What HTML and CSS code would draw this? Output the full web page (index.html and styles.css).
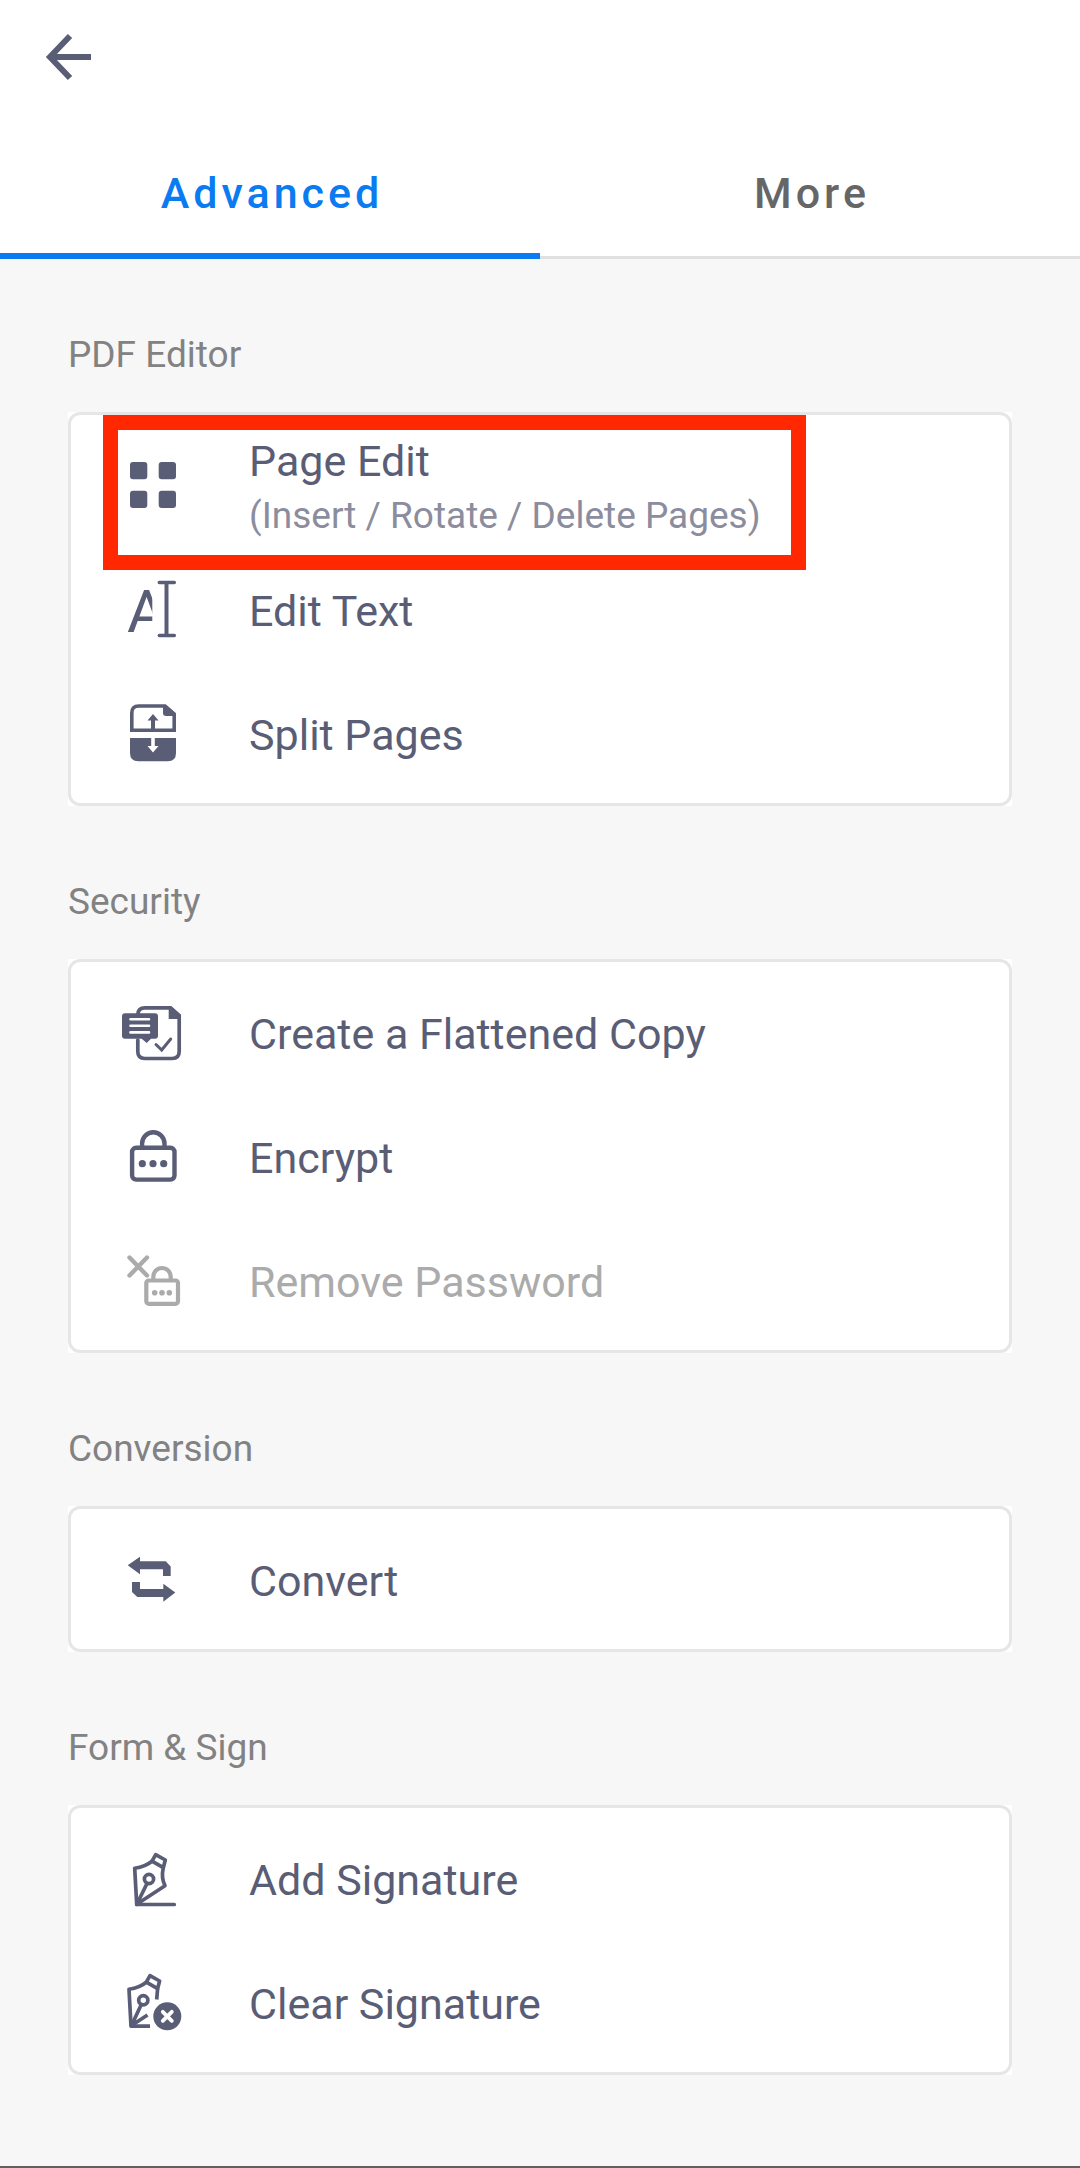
FILE: index.html
```html
<!DOCTYPE html>
<html lang="en">

<head>
    <meta charset="UTF-8">
    <meta name="viewport" content="width=device-width, initial-scale=1.0">
    <title>PDF Tools</title>
    <link rel="stylesheet" href="styles.css">
</head>

<body>

    <header class="toolbar">
        <button class="back-button" type="button" aria-label="Back">
            <svg viewBox="0 0 56 56" fill="none" stroke="currentColor" stroke-width="6">
                <path d="M51 28H10M30 7L10 28L30 49" />
            </svg>
        </button>
    </header>

    <nav class="tabs" role="tablist">
        <button class="tab active" type="button" role="tab" aria-selected="true">Advanced</button>
        <button class="tab" type="button" role="tab" aria-selected="false">More</button>
    </nav>

    <main class="content">
        <section>
            <h2>PDF Editor</h2>
            <div class="card">
                <ul>
                    <li class="highlighted">
                        <button class="row" type="button">
                            <svg class="icon" viewBox="0 0 68 68" fill="currentColor">
                                <rect x="11" y="11" width="17.3" height="17.3" rx="3" />
                                <rect x="39.7" y="11" width="17.3" height="17.3" rx="3" />
                                <rect x="11" y="39.7" width="17.3" height="17.3" rx="3" />
                                <rect x="39.7" y="39.7" width="17.3" height="17.3" rx="3" />
                            </svg>
                            <span class="label">
                                <span>Page Edit</span>
                                <span class="sub">(Insert / Rotate / Delete Pages)</span>
                            </span>
                        </button>
                    </li>
                    <li>
                        <button class="row" type="button">
                            <svg class="icon" viewBox="0 0 68 68" aria-hidden="true">
                                <clipPath id="letterClip">
                                    <rect x="0" y="0" width="33.3" height="68" />
                                </clipPath>
                                <text class="icon-letter" x="8" y="57" clip-path="url(#letterClip)">A</text>
                                <path d="M40.3 7.5H55.3M40.3 60.5H55.3" fill="none" stroke="currentColor" stroke-width="3.5" stroke-linecap="round" />
                                <path d="M47.5 7.5V60.5" stroke="currentColor" stroke-width="4" />
                            </svg>
                            <span class="label">Edit Text</span>
                        </button>
                    </li>
                    <li>
                        <button class="row" type="button">
                            <svg class="icon" viewBox="0 0 68 68" fill="none" stroke="currentColor">
                                <path d="M12.8 31.2V14Q12.8 7 19.8 7H46L55.2 15V31.2Z" stroke-width="3.6" />
                                <path d="M44 6H47L57 14.5V17H47Q44 17 44 14Z" fill="currentColor" stroke="none" />
                                <path d="M34 32V20" stroke-width="4" />
                                <path d="M34 15L39.5 21.5H28.5Z" fill="currentColor" stroke="none" />
                                <path d="M11 39H57V54Q57 62.3 48.7 62.3H19.3Q11 62.3 11 54Z" fill="currentColor" stroke="none" />
                                <path d="M34 38V49" stroke="#fff" stroke-width="3.6" />
                                <path d="M34 53.5L39.5 47H28.5Z" fill="#fff" stroke="none" />
                            </svg>
                            <span class="label">Split Pages</span>
                        </button>
                    </li>
                </ul>
            </div>
        </section>

        <section>
            <h2>Security</h2>
            <div class="card">
                <ul>
                    <li>
                        <button class="row" type="button">
                            <svg class="icon" viewBox="0 0 68 68" fill="none" stroke="currentColor" stroke-linecap="round">
                                <path d="M18.8 18V17Q18.8 9.8 26 9.8H51.5L60.2 17.5V53.5Q60.2 60.5 53.2 60.5H25.8Q18.8 60.5 18.8 53.5V42" stroke-width="3.7" />
                                <path d="M49.7 8.5H52.5L62 17V21H49.7Z" fill="currentColor" stroke="none" />
                                <path d="M6 15.3H36Q39 15.3 39 18.3V37.7Q39 40.7 36 40.7H32L27.7 45L22.7 40.7H6Q3 40.7 3 37.7V18.3Q3 15.3 6 15.3Z" fill="currentColor" stroke="none" />
                                <path d="M11.5 21.2H30M11.5 27.8H30M11.5 34.4H30" stroke="#fff" stroke-width="2.6" />
                                <path d="M37 46.5L42.7 52L51.7 41" stroke-width="3" />
                            </svg>
                            <span class="label">Create a Flattened Copy</span>
                        </button>
                    </li>
                    <li>
                        <button class="row" type="button">
                            <svg class="icon" viewBox="0 0 68 68" fill="none" stroke="currentColor">
                                <rect x="13.1" y="25.8" width="42.4" height="31.8" rx="4" stroke-width="4.4" />
                                <path d="M23.1 25V21.5A11.2 11.2 0 0 1 45.5 21.5V25" stroke-width="4.4" />
                                <g fill="currentColor" stroke="none">
                                    <circle cx="23.3" cy="41.7" r="3.6" />
                                    <circle cx="34" cy="41.7" r="3.6" />
                                    <circle cx="44.7" cy="41.7" r="3.6" />
                                </g>
                            </svg>
                            <span class="label">Encrypt</span>
                        </button>
                    </li>
                    <li>
                        <button class="row" type="button" disabled>
                            <svg class="icon" viewBox="0 0 68 68" fill="none" stroke="currentColor">
                                <path d="M10.5 11.5L28 29.5M28 11.5L10.5 29.5" stroke-width="4.4" stroke-linecap="round" />
                                <rect x="27.3" y="34.5" width="31.7" height="23.3" rx="2.5" stroke-width="4.2" />
                                <path d="M34.3 34V30.7A8.7 8.7 0 0 1 51.7 30.7V34" stroke-width="4.2" />
                                <g fill="currentColor" stroke="none">
                                    <circle cx="35.7" cy="46.7" r="2.8" />
                                    <circle cx="43" cy="46.7" r="2.8" />
                                    <circle cx="50.3" cy="46.7" r="2.8" />
                                </g>
                            </svg>
                            <span class="label">Remove Password</span>
                        </button>
                    </li>
                </ul>
            </div>
        </section>

        <section>
            <h2>Conversion</h2>
            <div class="card">
                <ul>
                    <li>
                        <button class="row" type="button">
                            <svg class="icon" viewBox="0 0 68 68" fill="currentColor">
                                <path d="M8.7 20.3L21 11.7V16.3H46.7L51.7 21.5V31H44V24.3H21V29.3Z" />
                                <path d="M13 37H21V44H44.3V38.7L56.3 47.5L44.3 56.7V52H18.3L13 46.9Z" />
                            </svg>
                            <span class="label">Convert</span>
                        </button>
                    </li>
                </ul>
            </div>
        </section>

        <section>
            <h2>Form &amp; Sign</h2>
            <div class="card">
                <ul>
                    <li>
                        <button class="row" type="button">
                            <svg class="icon" viewBox="0 0 68 68" fill="none" stroke="currentColor" stroke-width="3.7" stroke-linejoin="round" stroke-linecap="round">
                                <path d="M36.7 10.7L46.3 16L44.3 23.7L33 17.2Z" />
                                <path d="M33 17.2Q26.5 22.5 15.7 24.3L17.7 60.3L46 41.7Q42 34 44.3 23.7" />
                                <circle cx="30" cy="35" r="4.6" />
                                <path d="M28 39.5L17.7 60.5H55.3" />
                            </svg>
                            <span class="label">Add Signature</span>
                        </button>
                    </li>
                    <li>
                        <button class="row" type="button">
                            <svg class="icon" viewBox="0 0 68 68" fill="none" stroke="currentColor" stroke-width="3.7" stroke-linejoin="round">
                                <path d="M31 7.7L40.6 13L38.6 20.7L27.3 14.2Z" />
                                <path d="M38.6 20.7L37.7 31.5M27.3 14.2Q20.8 19.5 10 21.3L12 58.2H31" />
                                <circle cx="24.3" cy="32.3" r="4.6" />
                                <path d="M22.3 36.5L12.5 57.5L28.5 47" />
                                <circle cx="48.3" cy="48.3" r="14" fill="currentColor" stroke="none" />
                                <path d="M43.8 43.8L52.8 52.8M52.8 43.8L43.8 52.8" stroke="#fff" stroke-width="3.8" stroke-linecap="round" />
                            </svg>
                            <span class="label">Clear Signature</span>
                        </button>
                    </li>
                </ul>
            </div>
        </section>
    </main>

</body>

</html>
```

FILE: styles.css
```css
*,
*::after {
    box-sizing: border-box;
}

body {
    font-family: Roboto, "Liberation Sans", sans-serif;
    margin: 0;
    display: flex;
    flex-direction: column;
    min-height: 100vh;
    background-color: #f7f7f7;
    color: #5a5d76;
    border-bottom: 2px solid #606060;
}

button {
    font: inherit;
    color: inherit;
    background: none;
    border: none;
    padding: 0;
    cursor: pointer;
}

svg {
    display: block;
    flex: none;
}

.toolbar {
    background-color: #fff;
    padding: 29px 40px 43px;
}

.back-button {
    display: block;
    width: 56px;
    height: 56px;
}

.tabs {
    display: flex;
    background-color: #fff;
}

.tab {
    flex: 1;
    height: 131px;
    padding: 0 0 2px 4px;
    font-size: 43px;
    font-weight: 500;
    letter-spacing: 4px;
    color: #666;
    box-shadow: inset 0 -3px 0 #e0e0e0;
}

.tab.active {
    color: #0a7bf0;
    box-shadow: inset 0 -6px 0 #0a7bf0;
}

.content {
    padding: 0 68px;
}

h2 {
    margin: 0;
    padding: 74px 0 35px;
    font-size: 37px;
    font-weight: 400;
    line-height: 44px;
    color: #828282;
}

.card {
    background-color: #fff;
}

.card ul {
    list-style: none;
    margin: 0;
    padding: 8px 0;
    border: 3px solid #e6e6e6;
    border-radius: 12px;
}

.row {
    display: flex;
    align-items: center;
    gap: 62px;
    width: 100%;
    height: 124px;
    padding: 0 48px;
    text-align: left;
}

.row:disabled {
    color: #ababab;
    cursor: default;
}

.icon {
    width: 68px;
    height: 68px;
}

.icon-letter {
    font-size: 60px;
    fill: currentColor;
}

.label {
    display: flex;
    flex-direction: column;
    gap: 8px;
    padding-top: 4px;
    font-size: 43px;
    line-height: 50px;
}

.sub {
    font-size: 37px;
    line-height: 44px;
    color: #8b8d9e;
}

/* red frame drawn over the row */
.highlighted {
    position: relative;
}

.highlighted::after {
    content: "";
    position: absolute;
    top: -8px;
    left: 32px;
    width: 703px;
    height: 155px;
    border: 15px solid #ff2800;
    pointer-events: none;
}
```
